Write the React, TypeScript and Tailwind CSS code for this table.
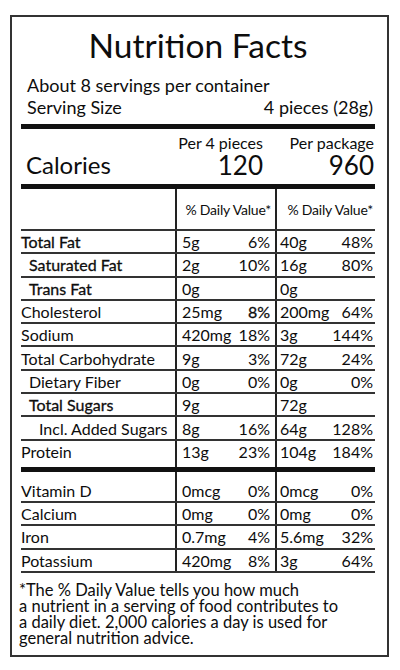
import type { ReactNode } from 'react';

type Nutrient = {
  label: string;
  a: string;
  ap: string;
  b: string;
  bp: string;
  indent?: 0 | 1 | 2;
  strong?: boolean;
  strongAp?: boolean;
};

const nutrients: Nutrient[] = [
  { label: 'Total Fat', a: '5g', ap: '6%', b: '40g', bp: '48%', strong: true },
  { label: 'Saturated Fat', a: '2g', ap: '10%', b: '16g', bp: '80%', indent: 1, strong: true },
  { label: 'Trans Fat', a: '0g', ap: '', b: '0g', bp: '', indent: 1, strong: true },
  { label: 'Cholesterol', a: '25mg', ap: '8%', b: '200mg', bp: '64%', strongAp: true },
  { label: 'Sodium', a: '420mg', ap: '18%', b: '3g', bp: '144%' },
  { label: 'Total Carbohydrate', a: '9g', ap: '3%', b: '72g', bp: '24%' },
  { label: 'Dietary Fiber', a: '0g', ap: '0%', b: '0g', bp: '0%', indent: 1 },
  { label: 'Total Sugars', a: '9g', ap: '', b: '72g', bp: '', indent: 1, strong: true },
  { label: 'Incl. Added Sugars', a: '8g', ap: '16%', b: '64g', bp: '128%', indent: 2 },
];

const minerals: Nutrient[] = [
  { label: 'Vitamin D', a: '0mcg', ap: '0%', b: '0mcg', bp: '0%' },
  { label: 'Calcium', a: '0mg', ap: '0%', b: '0mg', bp: '0%' },
  { label: 'Iron', a: '0.7mg', ap: '4%', b: '5.6mg', bp: '32%' },
  { label: 'Potassium', a: '420mg', ap: '8%', b: '3g', bp: '64%' },
];

const stroke = '[-webkit-text-stroke:0.3px_#111]';

function Row({ n, rowClass, align = 'items-center' }: { n: Nutrient; rowClass: string; align?: string }) {
  const pad = n.indent === 2 ? 'pl-[18px]' : n.indent === 1 ? 'pl-[8px]' : 'pl-0';
  return (
    <div className={`flex ${rowClass}`}>
      <div className={`w-[154px] flex ${align} ${pad} ${n.strong ? stroke : ''}`}>{n.label}</div>
      <div className={`w-[100px] flex ${align} justify-between border-l-2 border-[#222] pl-[5px] pr-[5px]`}>
        <span>{n.a}</span>
        <span className={n.strongAp ? stroke : ''}>{n.ap}</span>
      </div>
      <div className={`w-[100px] flex ${align} justify-between border-l-2 border-[#222] pl-[3px] pr-[2px]`}>
        <span>{n.b}</span>
        <span>{n.bp}</span>
      </div>
    </div>
  );
}

function Spacer({ h }: { h: string }): ReactNode {
  return (
    <div className={`flex ${h}`}>
      <div className="w-[154px]" />
      <div className="w-[100px] border-l-2 border-[#222]" />
      <div className="w-[100px] border-l-2 border-[#222]" />
    </div>
  );
}

export default function App() {
  return (
    <div className="w-[400px] h-[670px] bg-white font-['Lato','Liberation_Sans',sans-serif] text-[#0d0d0d] overflow-hidden">
      <div className="ml-[10px] mt-[15px] w-[379px] h-[642px] border-2 border-[#333] pl-[9px] pr-[12px]">
        {/* Title */}
        <h1 className="pt-[9px] text-center text-[33.5px] leading-[38px]">Nutrition Facts</h1>

        {/* Servings */}
        <div className="mt-[10px] pl-[6px] pr-[2px] text-[18px] leading-[22px]">
          <p>About 8 servings per container</p>
          <div className="flex justify-between">
            <span>Serving Size</span>
            <span>4 pieces (28g)</span>
          </div>
        </div>
        <div className="mt-[6px] h-[5px] bg-[#111]" />

        {/* Calories */}
        <div className="flex items-end h-[55px] pb-[6px]">
          <div className="w-[154px] pl-[5px] text-[24px] leading-[27px]">Calories</div>
          <div className="w-[100px] pr-[12px] text-right">
            <div className="text-[16px] leading-[18px]">Per 4 pieces</div>
            <div className="text-[26px] leading-[26px]">120</div>
          </div>
          <div className="w-[100px] pr-[1px] text-right">
            <div className="text-[16px] leading-[18px]">Per package</div>
            <div className="text-[26px] leading-[26px]">960</div>
          </div>
        </div>
        <div className="h-[5px] bg-[#111]" />

        {/* Table */}
        <div className="text-[16px]">
          <div className="flex h-[42px] border-b-2 border-[#333] text-[14px] tracking-[-0.2px]">
            <div className="w-[154px]" />
            <div className="w-[100px] flex items-center justify-end border-l-2 border-[#222] pr-[4px]">% Daily Value*</div>
            <div className="w-[100px] flex items-center justify-end border-l-2 border-[#222] pr-[2px]">% Daily Value*</div>
          </div>
          {nutrients.map((n) => (
            <Row key={n.label} n={n} rowClass="h-[23.3px] leading-[21px] border-b-2 border-[#333]" />
          ))}
          <Row n={{ label: 'Protein', a: '13g', ap: '23%', b: '104g', bp: '184%' }} rowClass="h-[21px] leading-[21px]" />
          <Spacer h="h-[5px]" />
          <div className="h-[5px] bg-[#111]" />
          {minerals.map((n, i) => (
            <Row
              key={n.label}
              n={n}
              align={i === 0 ? 'items-end' : 'items-center'}
              rowClass={`${i === 0 ? 'h-[31px]' : 'h-[23.5px]'} leading-[21px] border-b-2 border-[#333]`}
            />
          ))}
        </div>

        {/* Footnote */}
        <p className="mt-[9px] -ml-[2px] text-[16.5px] leading-[16px]">
          *The % Daily Value tells you how much
          <br />
          a nutrient in a serving of food contributes to
          <br />
          a daily diet. 2,000 calories a day is used for
          <br />
          general nutrition advice.
        </p>
      </div>
    </div>
  );
}
